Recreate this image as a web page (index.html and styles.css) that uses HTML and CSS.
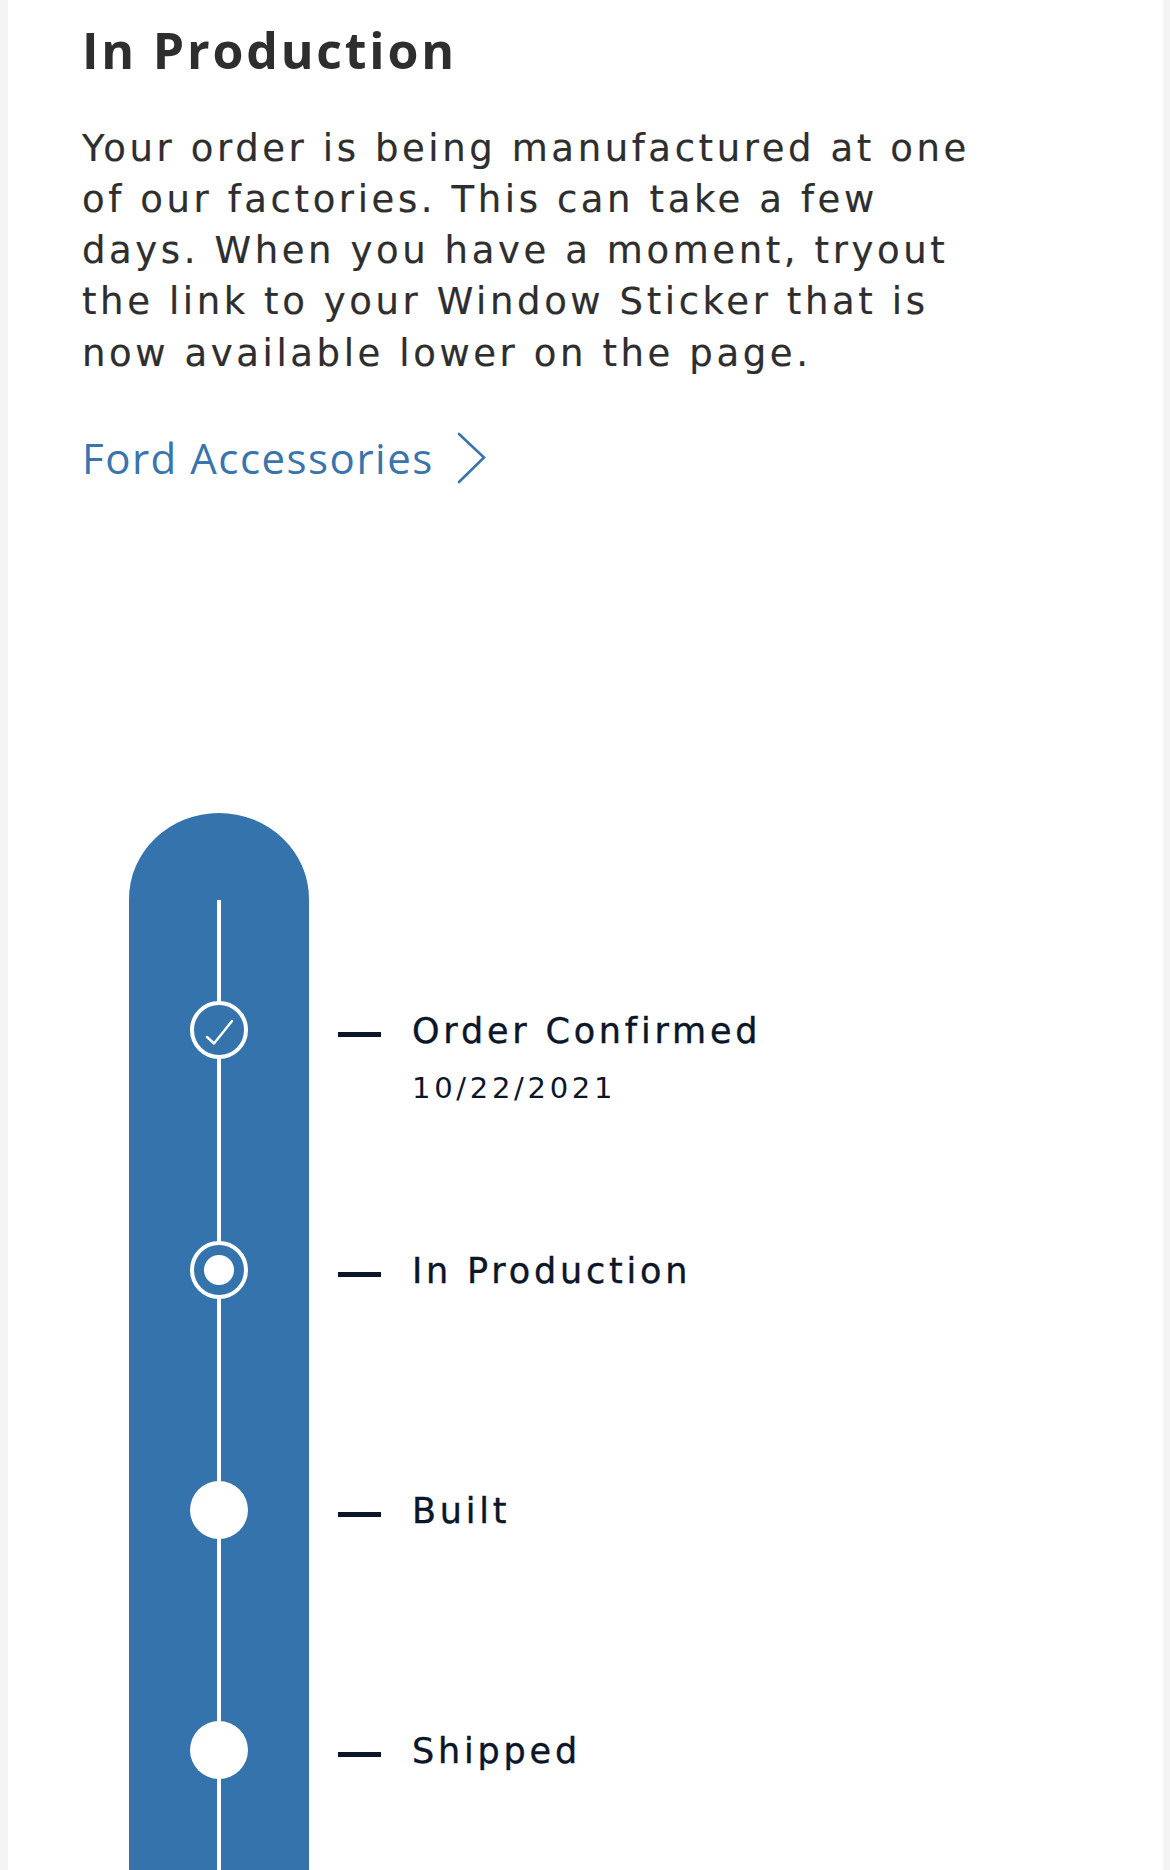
FILE: index.html
```html
<!DOCTYPE html>
<html lang="en">
<head>
<meta charset="utf-8">
<title>In Production</title>
<link rel="stylesheet" href="styles.css">
</head>
<body>
<main class="page">
  <h1 class="title">In Production</h1>
  <p class="intro">Your order is being manufactured at one of our factories. This can take a few days. When you have a moment, tryout the link to your Window Sticker that is now available lower on the page.</p>
  <a class="link" href="#">
    <span>Ford Accessories</span>
    <svg class="chev" width="30" height="52" viewBox="0 0 30 52" aria-hidden="true"><polyline points="3,2 28,25.5 3,50" fill="none" stroke="#3a74ad" stroke-width="2.6" stroke-linecap="round" stroke-linejoin="miter"/></svg>
  </a>

  <section class="timeline">
    <div class="cap"></div>
    <div class="step">
      <div class="seg"><span class="dot done"><svg width="50" height="50" viewBox="0 0 50 50" aria-hidden="true"><polyline points="13,32 20,38.5 38,16" fill="none" stroke="#fff" stroke-width="2.4" stroke-linecap="round" stroke-linejoin="round"/></svg></span></div>
      <div class="label">
        <div class="row"><span class="dash"></span><span class="name">Order Confirmed</span></div>
        <div class="date">10/22/2021</div>
      </div>
    </div>
    <div class="step">
      <div class="seg"><span class="dot current"></span></div>
      <div class="label"><div class="row"><span class="dash"></span><span class="name">In Production</span></div></div>
    </div>
    <div class="step">
      <div class="seg"><span class="dot todo"></span></div>
      <div class="label"><div class="row"><span class="dash"></span><span class="name">Built</span></div></div>
    </div>
    <div class="step">
      <div class="seg"><span class="dot todo"></span></div>
      <div class="label"><div class="row"><span class="dash"></span><span class="name">Shipped</span></div></div>
    </div>
  </section>
</main>
</body>
</html>
```

FILE: styles.css
```css
html, body {
  margin: 0;
  padding: 0;
  background: #f4f4f4;
}

.page {
  margin: 0 7px 0 8px;
  background: #fff;
  height: 1870px;
  overflow: hidden;
  padding: 20px 0 0 74px;
  box-sizing: border-box;
  font-family: "Open Sans", "Liberation Sans", sans-serif;
}

.title {
  margin: 0;
  font-size: 50px;
  line-height: 60px;
  font-weight: 700;
  color: #2e2e2e;
  letter-spacing: 2.8px;
}

.intro {
  margin: 42.5px 0 0 0;
  width: 915px;
  font-family: "DejaVu Sans", "Open Sans", sans-serif;
  font-size: 37px;
  line-height: 51.3px;
  color: #2e2e2e;
  letter-spacing: 3.6px;
  -webkit-text-stroke: 0.2px #2e2e2e;
}

.link {
  margin-top: 53.7px;
  display: inline-flex;
  align-items: center;
  gap: 22px;
  height: 50px;
  font-size: 42px;
  line-height: 50px;
  color: #3a74ad;
  text-decoration: none;
  letter-spacing: 1.5px;
}

.chev {
  display: block;
}

.timeline {
  margin: 330.3px 0 0 47px;
  display: flex;
  flex-direction: column;
}

.cap {
  width: 180px;
  height: 97px;
  border-radius: 90px 90px 0 0 / 86px 86px 0 0;
  background: linear-gradient(#fff, #fff) center bottom / 4px 10px no-repeat, #3473ac;
}

.step {
  display: flex;
  align-items: flex-start;
  height: 240px;
}

.seg {
  flex: 0 0 180px;
  height: 100%;
  display: flex;
  align-items: center;
  justify-content: center;
  background: linear-gradient(#fff, #fff) center / 4px 100% no-repeat, #3473ac;
}

.dot {
  width: 58px;
  height: 58px;
  border-radius: 50%;
  box-sizing: border-box;
  display: flex;
  align-items: center;
  justify-content: center;
}

.dot.done {
  border: 4px solid #fff;
  background: #3473ac;
}

.dot.current {
  border: 4px solid #fff;
  background: radial-gradient(circle, #fff 0 14.5px, #3473ac 15.5px);
}

.dot.todo {
  background: #fff;
}

.label {
  padding: 101px 0 0 29px;
  color: #0b1628;
  font-family: "DejaVu Sans", "Open Sans", sans-serif;
}

.row {
  display: flex;
  align-items: center;
  height: 40px;
}

.dash {
  width: 43px;
  height: 5px;
  background: #0b1628;
  margin: 7px 31px 0 0;
}

.name {
  font-size: 35px;
  line-height: 40px;
  letter-spacing: 3.8px;
  -webkit-text-stroke: 0.4px #0b1628;
}

.date {
  margin: 19px 0 0 74px;
  font-size: 29px;
  line-height: 36px;
  letter-spacing: 3.7px;
}
```
